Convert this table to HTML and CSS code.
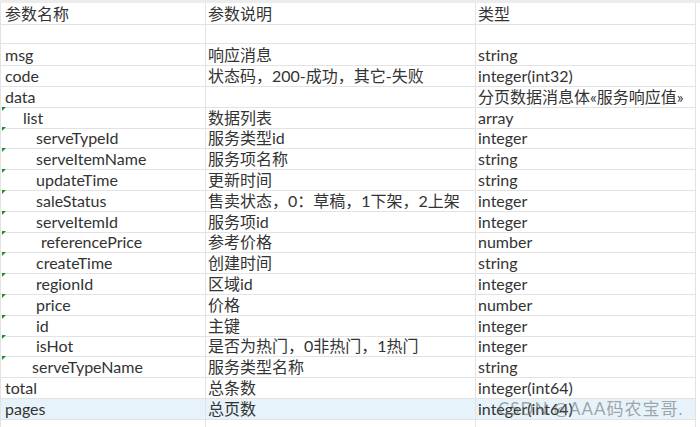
FILE: index.html
```html
<!DOCTYPE html>
<html lang="zh">
<head>
<meta charset="utf-8">
<link rel="stylesheet" href="styles.css">
</head>
<body>
<div class="topband"></div>
<div class="sheet">
  <div class="row head"><div class="c c1">参数名称</div><div class="c c2">参数说明</div><div class="c c3">类型</div></div>
  <div class="row"><div class="c c1"></div><div class="c c2"></div><div class="c c3"></div></div>
  <div class="row"><div class="c c1">msg</div><div class="c c2">响应消息</div><div class="c c3">string</div></div>
  <div class="row"><div class="c c1">code</div><div class="c c2">状态码，200-成功，其它-失败</div><div class="c c3">integer(int32)</div></div>
  <div class="row"><div class="c c1">data</div><div class="c c2"></div><div class="c c3">分页数据消息体«服务响应值»</div></div>
  <div class="row"><div class="c c1 mk ind1">list</div><div class="c c2">数据列表</div><div class="c c3">array</div></div>
  <div class="row"><div class="c c1 mk ind2">serveTypeId</div><div class="c c2">服务类型id</div><div class="c c3">integer</div></div>
  <div class="row"><div class="c c1 mk ind2">serveItemName</div><div class="c c2">服务项名称</div><div class="c c3">string</div></div>
  <div class="row"><div class="c c1 mk ind2">updateTime</div><div class="c c2">更新时间</div><div class="c c3">string</div></div>
  <div class="row"><div class="c c1 mk ind2">saleStatus</div><div class="c c2">售卖状态，0：草稿，1下架，2上架</div><div class="c c3">integer</div></div>
  <div class="row"><div class="c c1 mk ind2">serveItemId</div><div class="c c2">服务项id</div><div class="c c3">integer</div></div>
  <div class="row"><div class="c c1 mk ind3">referencePrice</div><div class="c c2">参考价格</div><div class="c c3">number</div></div>
  <div class="row"><div class="c c1 mk ind2">createTime</div><div class="c c2">创建时间</div><div class="c c3">string</div></div>
  <div class="row"><div class="c c1 mk ind2">regionId</div><div class="c c2">区域id</div><div class="c c3">integer</div></div>
  <div class="row"><div class="c c1 mk ind2">price</div><div class="c c2">价格</div><div class="c c3">number</div></div>
  <div class="row"><div class="c c1 mk ind2">id</div><div class="c c2">主键</div><div class="c c3">integer</div></div>
  <div class="row"><div class="c c1 mk ind2">isHot</div><div class="c c2">是否为热门，0非热门，1热门</div><div class="c c3">integer</div></div>
  <div class="row"><div class="c c1 mk ind4">serveTypeName</div><div class="c c2">服务类型名称</div><div class="c c3">string</div></div>
  <div class="row"><div class="c c1">total</div><div class="c c2">总条数</div><div class="c c3">integer(int64)</div></div>
  <div class="row hl"><div class="c c1">pages</div><div class="c c2">总页数</div><div class="c c3">integer(int64)</div></div>
  <div class="row fill"><div class="c c1"></div><div class="c c2"></div><div class="c c3"></div></div>
  <div class="watermark">CSDN @AAA码农宝哥.</div>
</div>
</body>
</html>
```

FILE: styles.css
```css
html, body {
  margin: 0;
  padding: 0;
  background: #ffffff;
}
body {
  width: 700px;
  height: 427px;
  overflow: hidden;
  font-family: "Lato", "Noto Sans CJK SC", sans-serif;
  font-size: 16px;
  color: #333333;
  display: flex;
  flex-direction: column;
}
.topband {
  height: 3px;
  background: #ececec;
  flex: none;
}
.sheet {
  position: relative;
  flex: 1;
  display: flex;
  flex-direction: column;
  width: 696px;
  border-left: 1px solid #e3e3e3;
  box-sizing: border-box;
}
.row {
  display: grid;
  grid-template-columns: 205px 270px 220px;
  height: 20.8px;
  flex: none;
}
.row.head {
  height: 20.5px;
}
.row.fill {
  flex: 1;
  height: auto;
}
.row.hl {
  background: #e6f3fb;
}
.c {
  position: relative;
  box-sizing: border-box;
  border-right: 1px solid #e3e3e3;
  border-bottom: 1px solid #e3e3e3;
  line-height: 20px;
  white-space: nowrap;
  overflow: visible;
  padding-left: 2px;
  padding-top: 1px;
}
.row.fill .c {
  border-bottom: none;
}
.c1 {
  padding-left: 4px;
}
.ind1 { padding-left: 22px; }
.ind2 { padding-left: 35px; }
.ind3 { padding-left: 40px; }
.ind4 { padding-left: 31px; }
.mk::before {
  content: "";
  position: absolute;
  left: 1px;
  top: 0;
  width: 0;
  height: 0;
  border-top: 4px solid #1f8f2a;
  border-right: 4px solid transparent;
}
.watermark {
  position: absolute;
  left: 497px;
  top: 396px;
  font-size: 17px;
  line-height: 20px;
  color: rgba(110, 110, 110, 0.6);
  letter-spacing: 1px;
  white-space: nowrap;
}
```
